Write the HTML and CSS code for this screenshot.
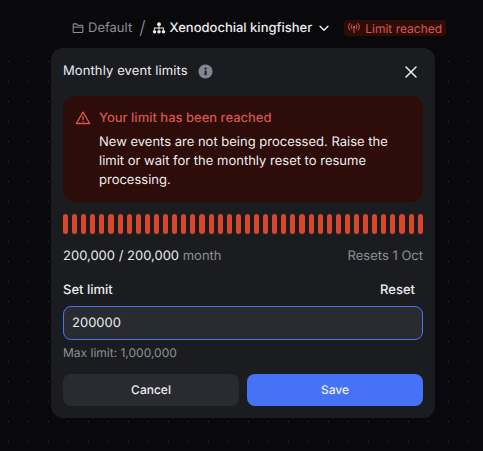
FILE: index.html
```html
<!DOCTYPE html>
<html lang="en">
<head>
  <meta charset="UTF-8" />
  <meta name="viewport" content="width=device-width, initial-scale=1" />
  <title>Monthly event limits</title>
  <link rel="stylesheet" href="styles.css">
</head>
<body>

<header class="topbar">
  <span class="crumb">
    <svg class="icon-sm" viewBox="0 0 16 16" fill="none" stroke="currentColor" stroke-width="1.2"><path d="M2.500 12.200V4.300c0-.6.4-1 1-1h2.700l1.300 1.600h5c.6 0 1 .4 1 1v6.300c0 .6-.4 1-1 1h-9c-.6 0-1-.4-1-1z"/><path d="M2.500 7h11"/></svg>
    Default
  </span>
  <span class="slash">/</span>
  <span class="project">
    <svg class="icon-sm" viewBox="0 0 16 16" fill="currentColor"><circle cx="8" cy="3.600" r="2.200"/><circle cx="2.900" cy="12.200" r="2"/><circle cx="8" cy="12.200" r="2"/><circle cx="13.100" cy="12.200" r="2"/><path d="M7.400 5h1.200v2.500h4.400c.5 0 .7.300.7.700V10h-1.200V8.700H8.600V10H7.400V8.700H3.300V10H2.100V8.200c0-.4.300-.7.700-.7h4.600z"/></svg>
    Xenodochial kingfisher
    <svg class="chevron" viewBox="0 0 16 16" fill="none" stroke="currentColor" stroke-width="1.700" stroke-linecap="round" stroke-linejoin="round"><path d="M3.500 6l4.500 4.500L12.500 6"/></svg>
  </span>
  <span class="badge">
    <svg class="icon-xs" viewBox="0 0 16 16" fill="none" stroke="currentColor" stroke-width="1.300" stroke-linecap="round"><circle cx="8" cy="6.500" r="1.600" fill="currentColor" stroke="none"/><path d="M8 8v6"/><path d="M5 3.800a4 4 0 0 0 0 5.400M11 3.800a4 4 0 0 1 0 5.400"/><path d="M2.500 2a7 7 0 0 0 0 9M13.500 2a7 7 0 0 1 0 9"/></svg>
    Limit reached
  </span>
</header>

<section class="modal">
  <div class="modal-head">
    <h2>Monthly event limits</h2>
    <svg class="info" viewBox="0 0 16 16"><circle cx="8" cy="8" r="7.500" fill="#85858f"/><rect x="7" y="7" width="2.200" height="5" rx=".5" fill="#1b1c20"/><circle cx="8.100" cy="4.800" r="1.200" fill="#1b1c20"/></svg>
    <svg class="close" viewBox="0 0 16 16" fill="none" stroke="currentColor" stroke-width="1.500" stroke-linecap="round"><path d="M3 3l10 10M13 3L3 13"/></svg>
  </div>

  <div class="alert">
    <svg class="alert-icon" viewBox="0 0 16 16" fill="none" stroke="currentColor" stroke-width="1.300" stroke-linejoin="round" stroke-linecap="round"><path d="M8 2.200L1.300 13.500h13.400z"/><path d="M8 6.500v3.200"/><path d="M8 11.500v.2"/></svg>
    <div>
      <div class="alert-title">Your limit has been reached</div>
      <p>New events are not being processed. Raise the limit or wait for the monthly reset to resume processing.</p>
    </div>
  </div>

  <div class="bars" id="bars"></div>

  <div class="usage">
    <span>200,000 / 200,000 <span class="muted">month</span></span>
    <span class="muted">Resets 1 Oct</span>
  </div>

  <div class="limit-head">
    <label for="limit">Set limit</label>
    <span class="reset">Reset</span>
  </div>
  <input type="text" id="limit" value="200000" />
  <div class="hint">Max limit: 1,000,000</div>

  <div class="actions">
    <button class="cancel">Cancel</button>
    <button class="save">Save</button>
  </div>
</section>

<script>
  const bars = document.getElementById('bars');
  for (let i = 0; i < 40; i++) {
    bars.appendChild(document.createElement('span'));
  }
</script>

</body>
</html>
```

FILE: styles.css
```css
body {
  margin: 0;
  height: 451px;
  overflow: hidden;
  box-sizing: border-box;
  padding: 18px 48px 0 51px;
  font-family: Inter, "Liberation Sans", sans-serif;
  font-size: 13px;
  text-rendering: geometricPrecision;
  color: #ececef;
  background-color: #09090b;
  background-image:
    linear-gradient(#09090b 15px, rgba(9, 9, 11, 0) 70px),
    radial-gradient(circle at 8.500px 1.500px, #35353a 0.6px, transparent 0.9px);
  background-size: 100% 100%, 20px 20px;
}
.topbar {
  display: flex;
  align-items: center;
  height: 20px;
  padding-left: 20px;
  white-space: nowrap;
}
.crumb {
  display: flex;
  align-items: center;
  gap: 3px;
  color: #8f8f98;
}
.slash {
  margin: 0 7px;
  color: #8f8f98;
  font-size: 18px;
  font-weight: 300;
}
.project {
  display: flex;
  align-items: center;
  gap: 3px;
  font-weight: 500;
}
.icon-sm {
  width: 14px;
  height: 14px;
}
.icon-xs {
  width: 12px;
  height: 12px;
}
.chevron {
  width: 14px;
  height: 14px;
  margin-left: 2px;
}
.badge {
  display: flex;
  align-items: center;
  gap: 5px;
  margin-left: 13px;
  padding: 0 4px;
  height: 16px;
  border-radius: 4px;
  font-size: 12px;
  color: #d8594f;
  background: #2e0c09;
}
.modal {
  margin-top: 10px;
  height: 370px;
  box-sizing: border-box;
  padding: 12px;
  border-radius: 12px;
  background: #1b1c20;
}
.modal-head {
  display: flex;
  align-items: center;
  height: 22px;
  margin-bottom: 14px;
}
.modal-head h2 {
  margin: 0;
  font-size: 13px;
  font-weight: 400;
  letter-spacing: 0.1px;
}
.info {
  width: 15px;
  height: 15px;
  margin-left: 10px;
}
.close {
  width: 16px;
  height: 16px;
  margin: 2px 4px 0 auto;
}
.alert {
  display: flex;
  gap: 8px;
  height: 106px;
  box-sizing: border-box;
  padding: 14px 12px 12px;
  border-radius: 12px;
  background: #2e0c09;
}
.alert-icon {
  flex: none;
  width: 16px;
  height: 16px;
  color: #d8594f;
}
.alert-title {
  margin-bottom: 7px;
  color: #d2564c;
  font-weight: 500;
}
.alert p {
  margin: 0;
  line-height: 19px;
}
.bars {
  display: flex;
  gap: 4px;
  height: 20px;
  margin-top: 12px;
}
.bars span {
  flex: 1;
  border-radius: 3px;
  background: #d9472f;
}
.usage {
  display: flex;
  justify-content: space-between;
  margin-top: 14px;
  line-height: 16px;
}
.muted {
  color: #8f8f98;
}
.limit-head {
  display: flex;
  justify-content: space-between;
  margin-top: 18px;
  padding-right: 8px;
  line-height: 16px;
  font-weight: 500;
}
input {
  display: block;
  width: 100%;
  height: 34px;
  box-sizing: border-box;
  margin-top: 8px;
  padding: 0 8px;
  border: 1px solid #4673f6;
  border-radius: 8px;
  outline: none;
  font: inherit;
  text-rendering: geometricPrecision;
  color: #ececef;
  background: #2a2b30;
}
.hint {
  margin-top: 5px;
  font-size: 12px;
  line-height: 15px;
  color: #8f8f98;
}
.actions {
  display: flex;
  gap: 8px;
  margin-top: 14px;
}
button {
  flex: 1;
  height: 32px;
  padding: 0 0 2px;
  border: none;
  border-radius: 8px;
  font: inherit;
  font-size: 12px;
  font-weight: 500;
  text-rendering: geometricPrecision;
  color: #ececef;
}
.cancel {
  background: #2a2b30;
}
.save {
  background: #4673f6;
}
```
